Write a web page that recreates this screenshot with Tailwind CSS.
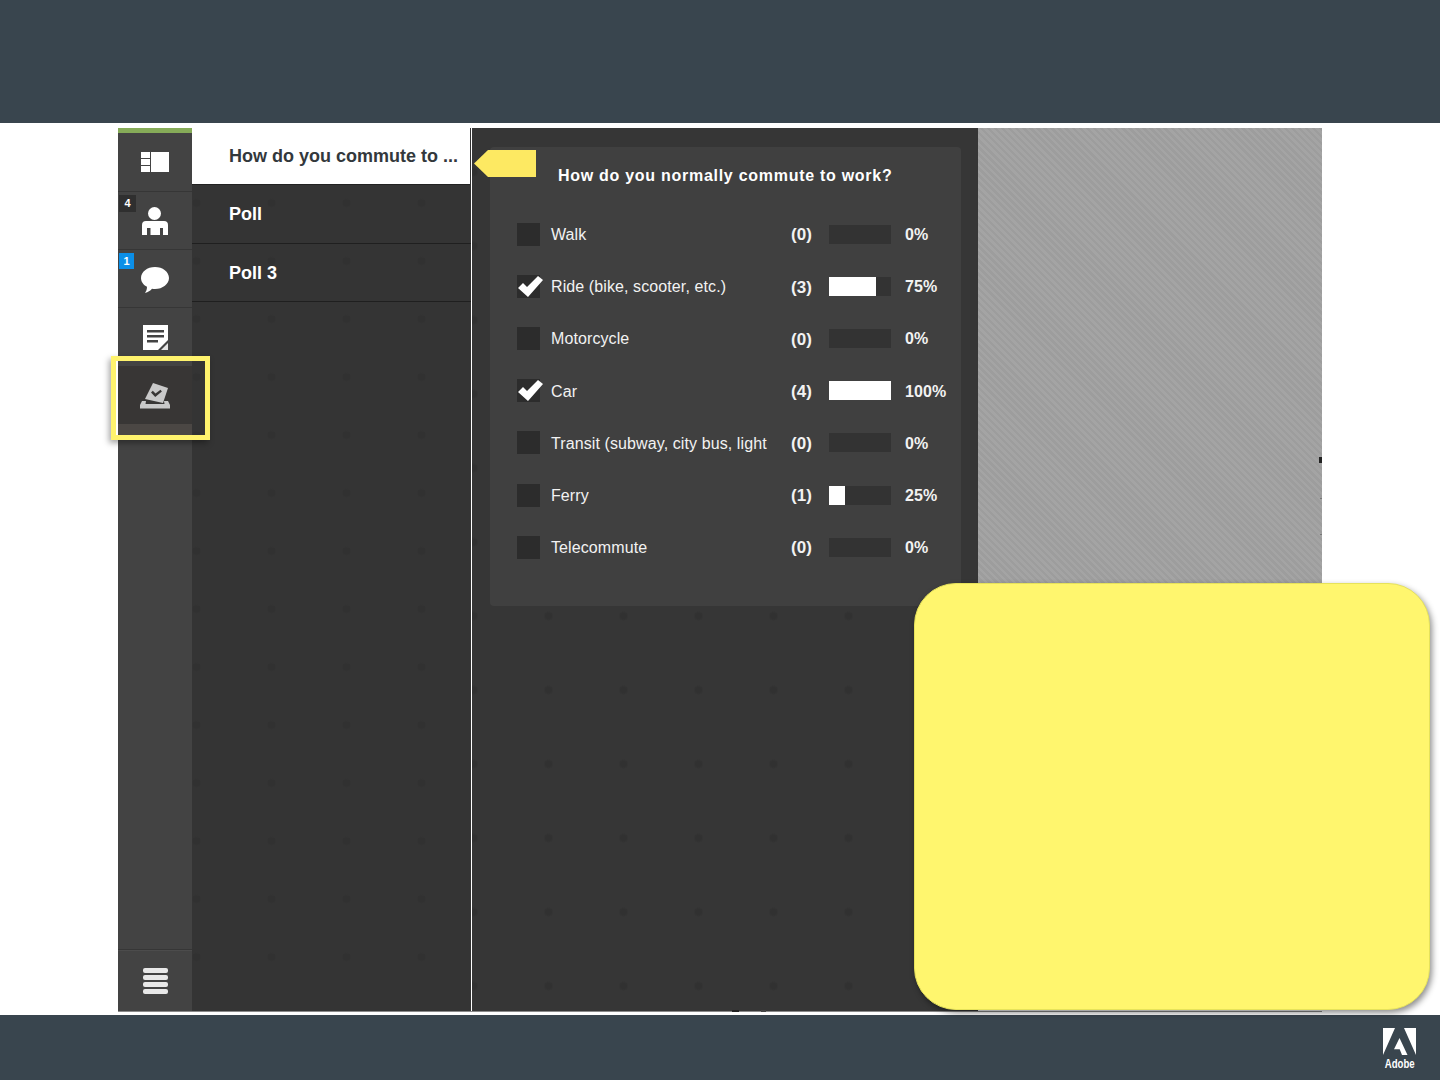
<!DOCTYPE html>
<html lang="en">
<head>
    <meta charset="UTF-8">
    <title>Poll pod</title>
    <script src="https://cdn.jsdelivr.net/npm/@tailwindcss/browser@4"></script>
</head>

<body class="relative flex flex-col h-[1080px] overflow-hidden bg-white font-['Liberation_Sans',Arial,sans-serif]">
    <header class="h-[123px] shrink-0 bg-[#39454e]"></header>

    <main class="flex-1 min-h-0 pt-[5px] pb-[3px] pl-[118px] pr-[118px]">
        <div class="flex h-full border-b border-[#8a8a8a]">
            <!-- icon rail -->
            <nav class="w-[74px] shrink-0 flex flex-col bg-[#434343] border-t-[5px] border-[#86ab58]">
                <div class="h-[59px] flex items-center justify-center border-b border-[#363636]">
                    <svg width="28" height="20" viewBox="0 0 28 20" fill="#fff" class="mt-[-1px]">
                        <rect x="0" y="0" width="9" height="6"/><rect x="0" y="7" width="9" height="6"/><rect x="0" y="14" width="9" height="6"/><rect x="10" y="0" width="18" height="20"/>
                    </svg>
                </div>
                <div class="relative h-[58px] flex items-center justify-center border-b border-[#363636]">
                    <span class="absolute left-[1px] top-[3px] w-[17px] h-[17px] bg-[#2f2f2f] text-white text-[11px] font-bold leading-[17px] text-center">4</span>
                    <svg width="26" height="28" viewBox="0 0 26 28" fill="#fff" class="mt-[1px]">
                        <circle cx="12.500" cy="6.500" r="6.500"/>
                        <path d="M4 14h18a4 4 0 0 1 4 4v10h-5v-7h-3v7H8.500v-7h-3.500v7H0V18a4 4 0 0 1 4-4z"/>
                    </svg>
                </div>
                <div class="relative h-[58px] flex items-center justify-center border-b border-[#363636]">
                    <span class="absolute left-[1px] top-[3px] w-[15px] h-[16px] bg-[#0b8fe8] text-white text-[11px] font-bold leading-[16px] text-center">1</span>
                    <svg width="28" height="26" viewBox="0 0 28 26" fill="#fff" class="mt-[3px]">
                        <path d="M14 0c7.700 0 14 4.900 14 11 0 6-6.300 11-14 11-1 0-2-.1-3-.2-1.800 2-3.800 3.400-7 4.200 1.300-1.900 2-3.500 2-6.200C2.400 18 0 14.700 0 11 0 4.900 6.300 0 14 0z"/>
                    </svg>
                </div>
                <div class="h-[58px] flex items-center justify-center">
                    <svg width="25" height="25" viewBox="0 0 25 25" class="mt-[1px]">
                        <path fill="#fff" d="M0 0h25v15L15 25H0z"/>
                        <path fill="#434343" d="M4 5h17v2.500H4zM4 10h17v2.500H4zM4 15h11v2.500H4z"/>
                        <path fill="#e4e4e4" d="M18 25l7-7v7z"/>
                    </svg>
                </div>
                <div class="h-[58px] flex items-center justify-center bg-[#383635]">
                    <svg width="30" height="26" viewBox="0 0 30 26" fill="#c9c9c9" class="mt-[2px]">
                        <path d="M13 0l15 5-5 15-18-4z"/>
                        <path fill="#383635" d="M11 9.500l1.800-1.700 2.700 2.700 5-3.700 1.400 1.800-6.700 5.300z"/>
                        <path d="M2 18h4l-.5 3h19l-.5-3h4l2 4v3.500H0V22z"/>
                    </svg>
                </div>
                <div class="h-[12px] bg-[#4b4744]"></div>
                <div class="flex-1 min-h-0 border-b border-[#363636]"></div>
                <div class="h-[61px] shrink-0 flex items-center justify-center border-t border-[#4c4c4c]">
                    <div class="flex flex-col gap-[2px]">
                        <span class="block w-[25px] h-[5px] rounded-[2px] bg-[#e8e8e8]"></span>
                        <span class="block w-[25px] h-[5px] rounded-[2px] bg-[#e8e8e8]"></span>
                        <span class="block w-[25px] h-[5px] rounded-[2px] bg-[#e8e8e8]"></span>
                        <span class="block w-[25px] h-[5px] rounded-[2px] bg-[#e8e8e8]"></span>
                    </div>
                </div>
            </nav>

            <!-- poll list -->
            <aside class="w-[279px] shrink-0 bg-[#343434] bg-[radial-gradient(circle,#313131_3px,transparent_5px)] bg-[size:75px_58px] bg-[position:42px_-12px]">
                <div class="h-[57px] mr-[1px] flex items-center pl-[37px] pt-[1px] bg-white text-[#33383c] text-[18px] font-bold whitespace-nowrap border-b border-[#222]">How do you commute to ...</div>
                <div class="h-[59px] flex items-center pl-[37px] pt-[1px] text-white text-[18px] font-bold border-b border-[#1f1f1f]">Poll</div>
                <div class="h-[58px] flex items-center pl-[37px] pt-[1px] text-white text-[18px] font-bold border-b border-[#1f1f1f]">Poll 3</div>
            </aside>

            <!-- poll results -->
            <section class="w-[507px] shrink-0 border-l border-white bg-[#363636] bg-[radial-gradient(circle,#313131_3px,transparent_5px)] bg-[size:75px_74px] bg-[position:39px_7px] pt-[19px] pl-[18px] pr-[17px]">
                <div class="h-[459px] bg-[#404040] rounded-[4px] pl-[27px]">
                    <h2 class="h-[61px] pt-[19px] pl-[41px] text-white text-[16px] leading-[19px] font-bold tracking-[0.72px] whitespace-nowrap">How do you normally commute to work?</h2>
                    <div class="grid grid-cols-[34px_240px_38px_62px_1fr] auto-rows-[52.2px] items-center text-[#f2f2f2] text-[16px] tracking-[0.1px]">
                        <span class="w-[23px] h-[23px] bg-[#2c2c2c]"></span>
                        <span class="mt-[2px]">Walk</span>
                        <b class="mt-[2px] text-[17px]">(0)</b>
                        <span class="h-[19px] bg-[#333333]"></span>
                        <b class="mt-[2px] pl-[14px]">0%</b>

                        <span class="relative w-[23px] h-[23px] bg-[#2c2c2c]">
                            <svg class="absolute left-[1px] top-[1px]" width="25" height="21" viewBox="0 0 25 21" fill="#fff"><path d="M0 12l5-5 4 4L20 0l5 4L10 21z"/></svg>
                        </span>
                        <span class="mt-[2px] whitespace-nowrap">Ride (bike, scooter, etc.)</span>
                        <b class="mt-[2px] text-[17px]">(3)</b>
                        <span class="h-[19px] bg-[#333333]"><span class="block h-full w-[75%] bg-white"></span></span>
                        <b class="mt-[2px] pl-[14px]">75%</b>

                        <span class="w-[23px] h-[23px] bg-[#2c2c2c]"></span>
                        <span class="mt-[2px]">Motorcycle</span>
                        <b class="mt-[2px] text-[17px]">(0)</b>
                        <span class="h-[19px] bg-[#333333]"></span>
                        <b class="mt-[2px] pl-[14px]">0%</b>

                        <span class="relative w-[23px] h-[23px] bg-[#2c2c2c]">
                            <svg class="absolute left-[1px] top-[1px]" width="25" height="21" viewBox="0 0 25 21" fill="#fff"><path d="M0 12l5-5 4 4L20 0l5 4L10 21z"/></svg>
                        </span>
                        <span class="mt-[2px]">Car</span>
                        <b class="mt-[2px] text-[17px]">(4)</b>
                        <span class="h-[19px] bg-white"></span>
                        <b class="mt-[2px] pl-[14px] whitespace-nowrap">100%</b>

                        <span class="w-[23px] h-[23px] bg-[#2c2c2c]"></span>
                        <span class="mt-[2px] whitespace-nowrap">Transit (subway, city bus, light</span>
                        <b class="mt-[2px] text-[17px]">(0)</b>
                        <span class="h-[19px] bg-[#333333]"></span>
                        <b class="mt-[2px] pl-[14px]">0%</b>

                        <span class="w-[23px] h-[23px] bg-[#2c2c2c]"></span>
                        <span class="mt-[2px]">Ferry</span>
                        <b class="mt-[2px] text-[17px]">(1)</b>
                        <span class="h-[19px] bg-[#333333]"><span class="block h-full w-[25%] bg-white"></span></span>
                        <b class="mt-[2px] pl-[14px]">25%</b>

                        <span class="w-[23px] h-[23px] bg-[#2c2c2c]"></span>
                        <span class="mt-[2px]">Telecommute</span>
                        <b class="mt-[2px] text-[17px]">(0)</b>
                        <span class="h-[19px] bg-[#333333]"></span>
                        <b class="mt-[2px] pl-[14px]">0%</b>
                    </div>
                </div>
            </section>

            <!-- stage -->
            <section class="flex-1 h-[455px] bg-[repeating-linear-gradient(45deg,#a4a4a4_0,#a4a4a4_2.5px,#9d9d9d_2.5px,#9d9d9d_5px)]"></section>
        </div>
    </main>

    <footer class="relative h-[65px] shrink-0 bg-[#39454e]">
        <div class="absolute left-[1383px] top-[13px] flex flex-col items-center w-[33px]">
            <svg width="33" height="27" viewBox="0 0 33 27" fill="#fff">
                <path d="M0 0h12L0 27zM21 0h12v27zM16.500 10l8 17h-5.500l-2.300-5.800h-5.700z"/>
            </svg>
            <span class="mt-[2px] text-white text-[12px] leading-[14px] font-bold scale-x-[0.8] whitespace-nowrap">Adobe</span>
        </div>
    </footer>

    <!-- callouts laid over the slide -->
    <svg class="absolute left-[474px] top-[150px]" width="62" height="27" viewBox="0 0 62 27" fill="#fde962">
        <path d="M14 0h48v27H14L0 13.500z"/>
    </svg>
    <div class="absolute left-[111px] top-[356px] w-[99px] h-[84px] border-[5px] border-[#fff36d] shadow-[-2px_3px_6px_rgba(0,0,0,0.35)]"></div>
    <div class="absolute left-[914px] top-[583px] w-[516px] h-[427px] rounded-[42px] bg-[#fff66e] border border-[#e6e25a] shadow-[2px_3px_6px_rgba(0,0,0,0.45)]"></div>
    <span class="absolute left-[1319px] top-[457px] w-[3px] h-[6px] bg-[#222]"></span>
    <span class="absolute left-[1320px] top-[498px] w-[2px] h-[1px] bg-[#777]"></span>
    <span class="absolute left-[1320px] top-[534px] w-[2px] h-[1px] bg-[#777]"></span>
    <span class="absolute left-[732px] top-[1010px] w-[7px] h-[2px] bg-[#222]"></span>
    <span class="absolute left-[761px] top-[1010px] w-[5px] h-[2px] bg-[#444]"></span>
</body>
</html>
